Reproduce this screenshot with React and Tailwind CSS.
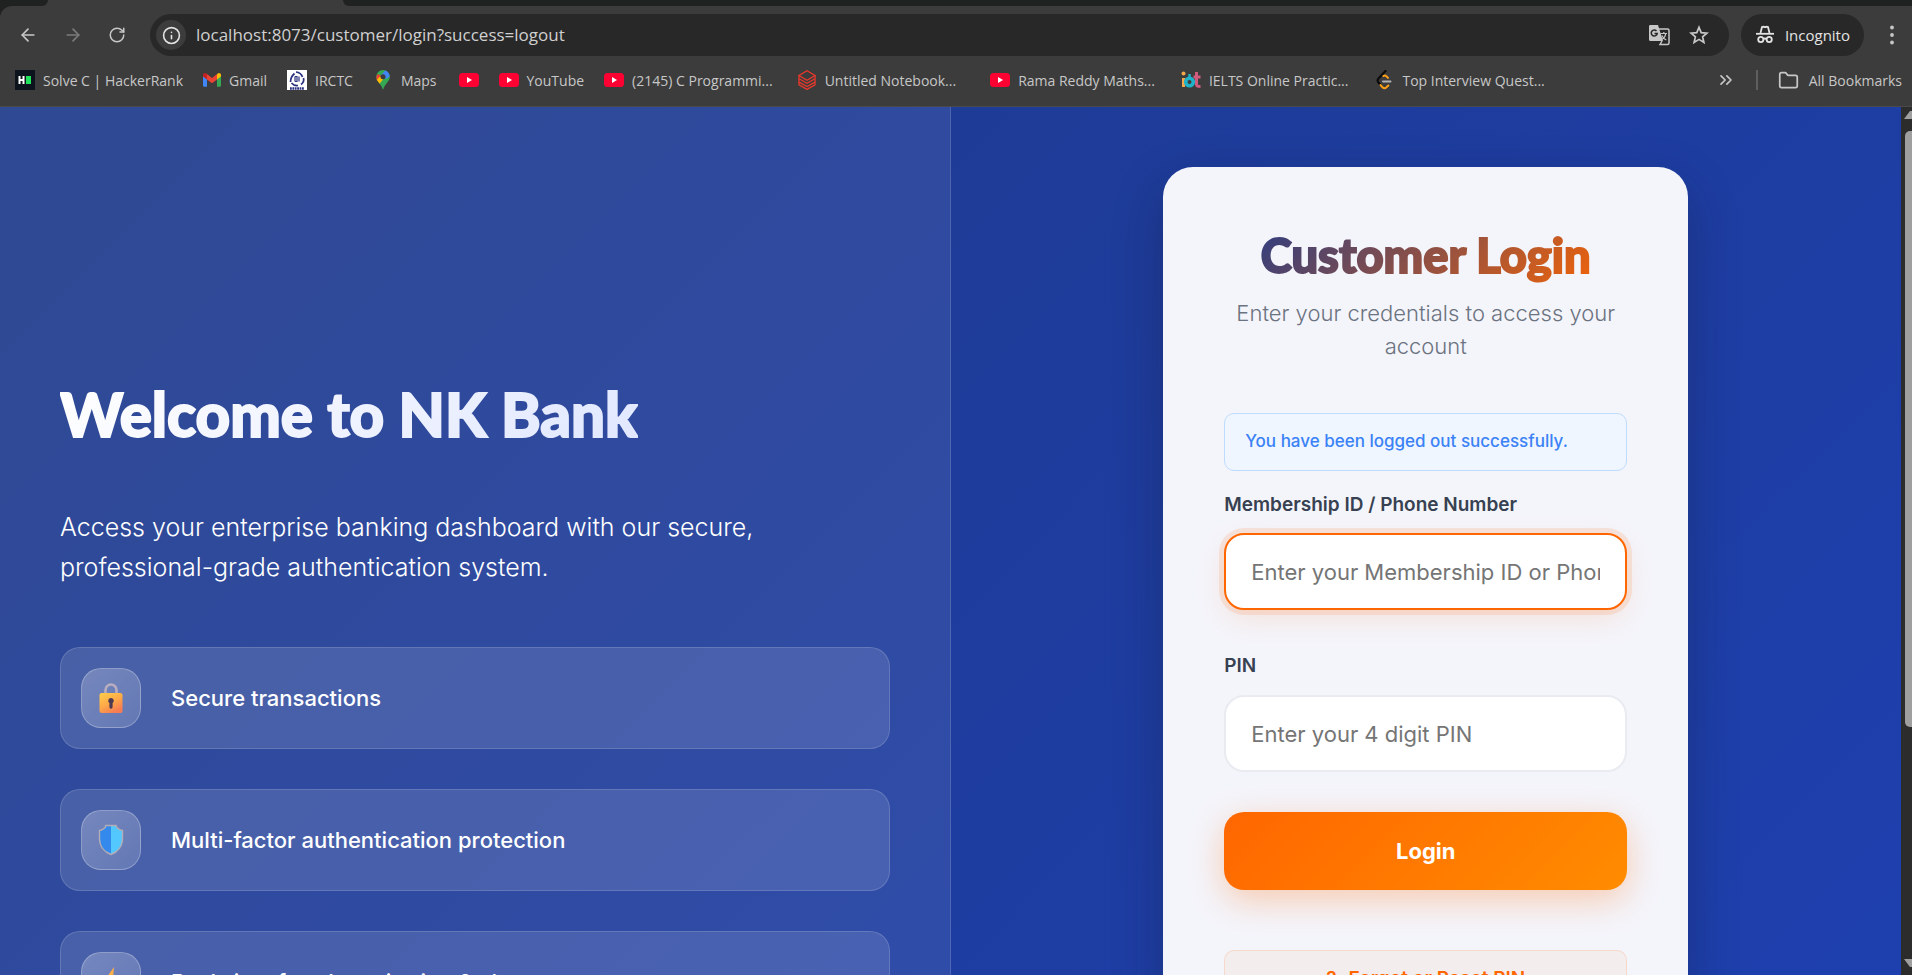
import React, { useState } from 'react';
import { ArrowLeft, ArrowRight, RotateCw, Info, Folder, ChevronsRight } from 'lucide-react';

const YouTubeIcon = () => (
  <svg className="w-5 h-5 shrink-0" viewBox="0 0 20 20">
    <rect x="0" y="3" width="20" height="14" rx="3.5" fill="#ff0033" />
    <path d="M8 7l5 3-5 3z" fill="#fff" />
  </svg>
);

const HackerRankIcon = () => (
  <svg className="w-5 h-5 shrink-0" viewBox="0 0 20 20">
    <rect width="20" height="20" fill="#0e141e" />
    <path d="M4.5 6v8M8.500 6v8M4.500 10h4" stroke="#fff" strokeWidth="2" fill="none" />
    <rect x="11" y="6" width="5" height="8" fill="#1ee35b" />
  </svg>
);

const GmailIcon = () => (
  <svg className="w-[18px] h-5 shrink-0" viewBox="0 0 18 20">
    <path d="M0 5v10.500a1.200 1.200 0 0 0 1.200 1.200H4V8z" fill="#4285f4" />
    <path d="M18 5v10.500a1.200 1.200 0 0 1-1.200 1.200H14V8z" fill="#34a853" />
    <path d="M14 4.500V9.500l4-3V5c0-2-2.200-2.600-3.400-1.500z" fill="#fbbc04" />
    <path d="M0 5c0-2 2.200-2.600 3.400-1.500L4 4v5.500l-4-3z" fill="#c5221f" />
    <path d="M4 9.500V4l5 3.900L14 4v5.500l-5 3.800z" fill="#ea4335" />
  </svg>
);

const IrctcIcon = () => (
  <svg className="w-5 h-5 shrink-0" viewBox="0 0 20 20">
    <rect width="20" height="20" fill="#fff" />
    <path d="M3.500 12q0-5 4-8.500M9 2q5 .5 6.500 5M16.500 8q1 4-2.500 6.500M11 15.500q-4 .5-6.500-2.500" stroke="#29307e" strokeWidth="1.700" fill="none" />
    <path d="M8 6.500v5M8 6.500h2v5h-2M12 6.500v5" stroke="#29307e" strokeWidth="1.200" fill="none" />
    <path d="M3 18.500h14" stroke="#29307e" strokeWidth="2.500" strokeDasharray="1.800 .6" />
  </svg>
);

const MapsIcon = () => (
  <svg className="w-5 h-5 shrink-0" viewBox="0 0 20 20">
    <defs>
      <clipPath id="mapPin">
        <path d="M10 0a6.800 6.800 0 0 0-6.800 6.800c0 2.500 1.200 4 2.800 6 1.800 2.300 2.900 4 4 7.200 1.100-3.200 2.200-4.900 4-7.200 1.600-2 2.800-3.500 2.800-6A6.800 6.800 0 0 0 10 0z" />
      </clipPath>
    </defs>
    <g clipPath="url(#mapPin)">
      <rect width="20" height="20" fill="#34a853" />
      <path d="M3 11L16 -4 22 3 13 9 10 7z" fill="#4285f4" />
      <path d="M2 8l3-4 5 3-5 6z" fill="#ea4335" />
      <path d="M3 10.500l4-4 3 3-5 6z" fill="#fbbc04" />
      <circle cx="10" cy="6.800" r="2.500" fill="#3c3c3c" />
    </g>
  </svg>
);

const NotebookIcon = () => (
  <svg className="w-5 h-5 shrink-0" viewBox="0 0 20 20" fill="none" stroke="#e8392b" strokeWidth="1.300">
    <path d="M10 .8l8 4.700-8 4.700-8-4.700z" />
    <path d="M2 5.500v3.200l8 4.600 8-4.600V5.500" />
    <path d="M2 8.700V12l8 4.500 8-4.500V8.700" />
    <path d="M2 12v2.800l8 4.600 8-4.600V12" />
  </svg>
);

const IotIcon = () => (
  <svg className="w-5 h-5 shrink-0" viewBox="0 0 20 20" fill="none">
    <circle cx="2.500" cy="3.500" r="2" fill="#f3a64b" />
    <path d="M2.500 8v9" stroke="#f3a64b" strokeWidth="3" />
    <circle cx="8.500" cy="12" r="3.800" stroke="#20b2c9" strokeWidth="3.600" />
    <path d="M8.500 4v5" stroke="#20b2c9" strokeWidth="2.500" />
    <path d="M15.500 2v12.500q0 2 4 2M12.500 7h7" stroke="#cf5b7d" strokeWidth="3" />
  </svg>
);

const LeetCodeIcon = () => (
  <svg className="w-5 h-5 shrink-0" viewBox="0 0 20 20" fill="none" strokeLinecap="round">
    <path d="M11.500 1L4.500 8.500q-1.800 2 0 4l2 2.500" stroke="#0b0b0b" strokeWidth="2.200" />
    <path d="M9.500 6q1.200-1 2.600 0l1.900 1.900M6.500 15l2 2.300q2 1.800 4 0l1.800-1.800" stroke="#ffa116" strokeWidth="2" />
    <path d="M9 11.500h7.500" stroke="#b3b3b3" strokeWidth="2" />
  </svg>
);

const TranslateIcon = () => (
  <svg className="w-6 h-6" viewBox="0 0 24 24" fill="none">
    <path d="M3 2h8l5 16H3.500A1.500 1.500 0 0 1 2 16.500v-13A1.500 1.500 0 0 1 3 2z" fill="#c7c7c7" />
    <path d="M11.500 6H20.500a1.500 1.500 0 0 1 1.500 1.500V20a1.500 1.500 0 0 1-1.500 1.500H13l2-3.500" stroke="#c7c7c7" strokeWidth="1.500" />
    <path d="M9.500 8a3 3 0 1 0 .7 2.500H7.500" stroke="#282828" strokeWidth="1.500" />
    <path d="M13.500 10.500h6.500M16.800 9v1.500M18.800 10.500c-.5 3-2 5-4 6M14.800 12.500c1 2 2.500 3.500 4.500 4.500" stroke="#c7c7c7" strokeWidth="1.200" />
  </svg>
);

const StarIcon = () => (
  <svg className="w-5 h-5" viewBox="0 0 20 20" fill="none" stroke="#c7c7c7" strokeWidth="1.700">
    <path d="M10 2.300l2.200 5.300 5.700.5-4.300 3.700 1.300 5.600L10 14.400l-4.900 3 1.300-5.600L2.100 8.100l5.700-.5z" />
  </svg>
);

const IncognitoIcon = () => (
  <svg className="w-5 h-5" viewBox="0 0 20 20" fill="none" stroke="#e3e3e3" strokeWidth="1.800">
    <path d="M5.500 8l1.500-6q1.500-.6 3 .3 1.500-.9 3-.3L14.500 8" />
    <path d="M1 8.800h18" />
    <circle cx="5.800" cy="14.500" r="2.600" />
    <circle cx="14.200" cy="14.500" r="2.600" />
    <path d="M8.400 14q1.600-1 3.200 0" />
  </svg>
);

const MenuIcon = () => (
  <svg className="w-6 h-6" viewBox="0 0 24 24" fill="#c7c7c7">
    <circle cx="12" cy="4.500" r="1.900" />
    <circle cx="12" cy="12" r="1.900" />
    <circle cx="12" cy="19.500" r="1.900" />
  </svg>
);

const LockIcon = () => (
  <svg className="w-7 h-8" viewBox="0 0 28 32">
    <defs>
      <linearGradient id="lockBody" x1="0" y1="0" x2="0.600" y2="1">
        <stop offset="0" stopColor="#ffcf4a" />
        <stop offset="0.550" stopColor="#fdaa48" />
        <stop offset="1" stopColor="#f77c52" />
      </linearGradient>
    </defs>
    <path d="M8.500 13V8a5.500 5.500 0 0 1 11 0v5" fill="none" stroke="#b9adc0" strokeWidth="2.600" />
    <rect x="2.500" y="11" width="23" height="20" rx="2.200" fill="url(#lockBody)" />
    <path d="M14 16a2.800 2.800 0 0 0-1.600 5.100v4a1.600 1.600 0 0 0 3.200 0v-4A2.800 2.800 0 0 0 14 16z" fill="#4b3a52" />
  </svg>
);

const ShieldIcon = () => (
  <svg className="w-7 h-8" viewBox="0 0 28 32">
    <path d="M14 1.500H9.500C8.500 4.500 6 6 2.500 6.500v8C2.500 22 7 28 14 30.500z" fill="#3389ec" />
    <path d="M14 1.500h4.500C19.500 4.500 22 6 25.500 6.500v8C25.500 22 21 28 14 30.500z" fill="#52c8ff" />
    <path d="M9 1.500h10C20 4.500 22 5.800 25.500 6.500v8C25.500 22 21 28 14 30.500 7 28 2.500 22 2.500 14.500v-8C6 5.800 8 4.500 9 1.500z" fill="none" stroke="#b4adb5" strokeWidth="1.400" />
  </svg>
);

const BoltIcon = () => (
  <svg className="w-7 h-8" viewBox="0 0 28 32">
    <path d="M17 1L5 18h7l-3 13 14-18h-7z" fill="#fdae45" />
  </svg>
);

const bookmarks = [
  { icon: <HackerRankIcon />, label: 'Solve C | HackerRank', space: 'mr-5' },
  { icon: <GmailIcon />, label: 'Gmail', space: 'mr-5' },
  { icon: <IrctcIcon />, label: 'IRCTC', space: 'mr-5' },
  { icon: <MapsIcon />, label: 'Maps', space: 'mr-[22px]' },
  { icon: <YouTubeIcon />, label: '', space: 'mr-5' },
  { icon: <YouTubeIcon />, label: 'YouTube', space: 'mr-5' },
  { icon: <YouTubeIcon />, label: '(2145) C Programmi...', space: 'mr-6' },
  { icon: <NotebookIcon />, label: 'Untitled Notebook...', space: 'mr-[34px]' },
  { icon: <YouTubeIcon />, label: 'Rama Reddy Maths...', space: 'mr-[26px]' },
  { icon: <IotIcon />, label: 'IELTS Online Practic...', space: 'mr-[26px]' },
  { icon: <LeetCodeIcon />, label: 'Top Interview Quest...', space: '' },
];

const features = [
  { icon: <LockIcon />, label: 'Secure transactions' },
  { icon: <ShieldIcon />, label: 'Multi-factor authentication protection' },
  { icon: <BoltIcon />, label: 'Real-time fraud monitoring & alerts' },
];

function BrowserBar() {
  const [url, setUrl] = useState('localhost:8073/customer/login?success=logout');

  return (
    <header className="shrink-0 bg-[#202221] text-[#c7c7c7] font-['Open_Sans','Noto_Sans',sans-serif]">
      {/* bottom edge of the tab strip */}
      <div className="h-[6px] flex bg-[#3c3c3c]">
        <div className="w-12 bg-[#202221] rounded-br-xl" />
        <div className="w-[295px]" />
        <div className="flex-1 bg-[#202221] rounded-bl-xl" />
      </div>
      <div className="bg-[#3c3c3c] rounded-tl-xl border-b border-[#4a4a4a] h-[101px]">
        <div className="flex items-center pt-2 pr-2">
          <nav className="flex items-center gap-[25px] pl-[18px] w-[150px]">
            <button aria-label="Back"><ArrowLeft size={20} /></button>
            <button aria-label="Forward" className="text-[#7b7b7b]"><ArrowRight size={20} /></button>
            <button aria-label="Reload"><RotateCw size={18} /></button>
          </nav>
          <div className="flex-1 min-w-0 h-[42px] rounded-full bg-[#282828] flex items-center pl-[6px] pr-5">
            <button aria-label="Site information" className="w-[30px] h-[30px] rounded-full bg-[#3c3c3c] text-[#e3e3e3] flex items-center justify-center">
              <Info size={19} />
            </button>
            <input
              aria-label="Address"
              className="flex-1 min-w-0 ml-[10px] bg-transparent outline-none text-[17px] text-[#d0d0d0]"
              value={url}
              onChange={e => setUrl(e.target.value)}
            />
            <button aria-label="Translate"><TranslateIcon /></button>
            <button aria-label="Bookmark this page" className="ml-[18px]"><StarIcon /></button>
          </div>
          <button className="ml-3 h-[42px] px-[14px] rounded-full bg-[#282828] text-[#e3e3e3] text-[15px] flex items-center gap-[10px]">
            <IncognitoIcon />
            Incognito
          </button>
          <button aria-label="Menu" className="ml-4"><MenuIcon /></button>
        </div>
        <div className="flex items-center h-12 pl-[15px] pr-[10px] text-[14px]">
          {bookmarks.map((b, i) => (
            <a key={i} href="#" aria-label={b.label || 'YouTube'} className={`flex items-center gap-2 whitespace-nowrap ${b.space}`}>
              {b.icon}
              {b.label}
            </a>
          ))}
          <button aria-label="More bookmarks" className="ml-auto"><ChevronsRight size={20} /></button>
          <div className="w-[2px] h-5 bg-[#5f5f5f] mx-5" />
          <button className="flex items-center gap-[10px] whitespace-nowrap"><Folder size={21} />All Bookmarks</button>
        </div>
      </div>
    </header>
  );
}

export default function App() {
  const [memberId, setMemberId] = useState('');
  const [pin, setPin] = useState('');

  return (
    <div className="h-screen flex flex-col overflow-hidden font-[Inter,sans-serif]">
      <BrowserBar />

      <div className="flex-1 min-h-0 flex">
        <main className="flex-1 min-w-0 flex overflow-hidden bg-linear-135/srgb from-[#1e3a8a] via-[#1e3c9c] to-[#1e40af]">
          <section className="w-1/2 px-[60px] pt-[262px] bg-white/8 border-r border-white/15">
            <h1 className="w-fit text-[60px] leading-[90px] font-black font-[Lato,sans-serif] [-webkit-text-stroke:2px_transparent] bg-linear-135/srgb from-white to-[#e0e7ff] bg-clip-text text-transparent">
              Welcome to NK Bank
            </h1>
            <p className="mt-12 text-[25px] leading-10 font-light text-white">
              Access your enterprise banking dashboard with our secure,<br />
              professional-grade authentication system.
            </p>
            <ul className="mt-[60px] flex flex-col gap-10">
              {features.map(f => (
                <li key={f.label} className="flex items-center gap-[30px] p-5 rounded-[20px] bg-white/12 border border-white/15">
                  <span className="w-[60px] h-[60px] shrink-0 rounded-[20px] flex items-center justify-center border border-white/25 bg-linear-135/srgb from-white/25 to-white/15">
                    {f.icon}
                  </span>
                  <span className="text-[22px] font-medium text-white">{f.label}</span>
                </li>
              ))}
            </ul>
          </section>

          <section className="w-1/2 pt-[60px] flex justify-center items-start">
            <form className="w-[525px] px-[61px] py-[60px] rounded-[30px] bg-[#f4f5fb] shadow-[0_20px_50px_rgba(15,23,42,0.3)]" onSubmit={e => e.preventDefault()}>
              <h2 className="text-center text-[47px] leading-[56px] font-black font-[Lato,sans-serif] [-webkit-text-stroke:2px_transparent] bg-linear-135/srgb from-[#1e3a8a] to-[#ff6600] bg-clip-text text-transparent">
                Customer Login
              </h2>
              <p className="mt-[14px] text-center text-[22px] leading-[33px] font-light text-[#6b7280]">
                Enter your credentials to access your account
              </p>

              <div className="mt-[50px] h-[58px] px-5 flex items-center rounded-[10px] border border-[#bfdbfe] bg-[#eff6ff] text-[17px] font-medium text-[#3b82f6]">
                You have been logged out successfully.
              </div>

              <label htmlFor="memberId" className="block mt-5 text-[19px] leading-7 font-semibold text-[#374151]">Membership ID / Phone Number</label>
              <input
                id="memberId"
                className="block w-full h-[77px] mt-[14px] px-[25px] rounded-[20px] bg-white border-2 border-[#ff6600] outline-none text-[22px] placeholder:text-[#757575] shadow-[0_0_0_5px_rgba(255,102,0,0.12),0_10px_30px_rgba(255,102,0,0.12)]"
                placeholder="Enter your Membership ID or Phone Number"
                value={memberId}
                onChange={e => setMemberId(e.target.value)}
              />

              <label htmlFor="pin" className="block mt-[42px] text-[19px] leading-7 font-semibold text-[#374151]">PIN</label>
              <input
                id="pin"
                type="password"
                className="block w-full h-[77px] mt-[15px] px-[25px] rounded-[20px] bg-white border-2 border-[#e9ebf0] outline-none text-[22px] placeholder:text-[#757575]"
                placeholder="Enter your 4 digit PIN"
                value={pin}
                onChange={e => setPin(e.target.value)}
              />

              <button type="submit" className="block w-full h-[78px] mt-10 rounded-[20px] text-white text-[22px] font-bold bg-linear-135/srgb from-[#ff6600] to-[#ff8c00] shadow-[0_10px_35px_rgba(255,102,0,0.3)]">
                Login
              </button>

              <a href="#" className="mt-[60px] h-[58px] flex items-center justify-center gap-3 rounded-[10px] border border-[#ff6600]/15 bg-[#ff6600]/5 text-[19px] font-semibold text-[#ff6600]">
                <span>?</span>
                Forgot or Reset PIN
              </a>
            </form>
          </section>
        </main>

        {/* page scrollbar */}
        <div className="w-[11px] shrink-0 bg-[#2c2c2c] flex flex-col items-end overflow-hidden">
          <svg className="w-2 h-4" viewBox="0 0 8 16"><path d="M0 12l6-8 2 0v8z" fill="#9f9f9f" /></svg>
          <div className="w-[7px] h-[596px] mt-2 bg-[#9f9f9f] rounded-l-[5px]" />
          <svg className="w-2 h-4 mt-auto mb-1" viewBox="0 0 8 16"><path d="M0 4h8v8H6z" fill="#9f9f9f" /></svg>
        </div>
      </div>
    </div>
  );
}
